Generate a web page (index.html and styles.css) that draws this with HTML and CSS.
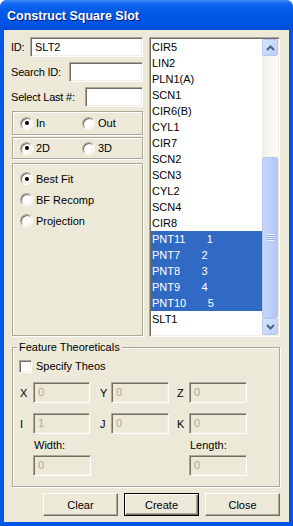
FILE: index.html
```html
<!DOCTYPE html>
<html lang="en">
<head>
    <meta charset="UTF-8">
    <title>Construct Square Slot</title>
    <link rel="stylesheet" href="styles.css">
</head>
<body>
    <div class="window">
        <div class="titlebar">Construct Square Slot</div>
        <div class="frame">
            <div class="client">
                <div class="top">
                    <div class="left">
                        <div class="field">
                            <span class="label">ID:</span>
                            <div class="edit edit-id">SLT2</div>
                        </div>
                        <div class="field">
                            <span class="label">Search ID:</span>
                            <div class="edit edit-search"></div>
                        </div>
                        <div class="field">
                            <span class="label">Select Last #:</span>
                            <div class="edit edit-last"></div>
                        </div>

                        <div class="group pair">
                            <div class="option"><span class="radio checked"></span>In</div>
                            <div class="option"><span class="radio"></span>Out</div>
                        </div>
                        <div class="group pair pair-small">
                            <div class="option"><span class="radio checked"></span>2D</div>
                            <div class="option"><span class="radio"></span>3D</div>
                        </div>
                        <div class="group methods">
                            <div class="option"><span class="radio checked"></span>Best Fit</div>
                            <div class="option"><span class="radio"></span>BF Recomp</div>
                            <div class="option"><span class="radio"></span>Projection</div>
                        </div>
                    </div>

                    <div class="listbox">
                        <div class="items">
                            <div class="item">CIR5</div>
                            <div class="item">LIN2</div>
                            <div class="item">PLN1(A)</div>
                            <div class="item">SCN1</div>
                            <div class="item">CIR6(B)</div>
                            <div class="item">CYL1</div>
                            <div class="item">CIR7</div>
                            <div class="item">SCN2</div>
                            <div class="item">SCN3</div>
                            <div class="item">CYL2</div>
                            <div class="item">SCN4</div>
                            <div class="item">CIR8</div>
                            <div class="item selected">PNT11       1</div>
                            <div class="item selected">PNT7       2</div>
                            <div class="item selected">PNT8       3</div>
                            <div class="item selected">PNT9       4</div>
                            <div class="item selected">PNT10       5</div>
                            <div class="item">SLT1</div>
                        </div>
                        <div class="scrollbar">
                            <div class="sb-button">
                                <svg width="9" height="6" viewBox="0 0 9 6"><path d="M1 5 L4.5 1.5 L8 5" fill="none" stroke="#4d6185" stroke-width="2"/></svg>
                            </div>
                            <div class="sb-track">
                                <div class="sb-thumb">
                                    <div class="grip"></div>
                                </div>
                            </div>
                            <div class="sb-button">
                                <svg width="9" height="6" viewBox="0 0 9 6"><path d="M1 1 L4.5 4.5 L8 1" fill="none" stroke="#4d6185" stroke-width="2"/></svg>
                            </div>
                        </div>
                    </div>
                </div>

                <fieldset class="theos">
                    <legend>Feature Theoreticals</legend>
                    <div class="check-row"><span class="checkbox"></span>Specify Theos</div>
                    <div class="coords">
                        <span class="axis">X</span><div class="edit disabled">0</div>
                        <span class="axis axis-mid">Y</span><div class="edit disabled">0</div>
                        <span class="axis axis-last">Z</span><div class="edit disabled">0</div>

                        <span class="axis">I</span><div class="edit disabled">1</div>
                        <span class="axis axis-mid">J</span><div class="edit disabled">0</div>
                        <span class="axis axis-last">K</span><div class="edit disabled">0</div>
                    </div>
                    <div class="size-row">
                        <div class="size">
                            <span class="size-label">Width:</span>
                            <div class="edit disabled">0</div>
                        </div>
                        <div class="size">
                            <span class="size-label">Length:</span>
                            <div class="edit disabled">0</div>
                        </div>
                    </div>
                </fieldset>

                <div class="buttons">
                    <button class="btn">Clear</button>
                    <button class="btn default">Create</button>
                    <button class="btn">Close</button>
                </div>
            </div>
        </div>
    </div>
</body>
</html>
```

FILE: styles.css
```css
* {
    box-sizing: border-box;
}

body {
    margin: 0;
    font-family: "Liberation Sans", Arial, sans-serif;
    font-size: 11px;
    color: #000;
    background: #fff;
}

.window {
    width: 293px;
    height: 526px;
    display: flex;
    flex-direction: column;
    border-radius: 7px 7px 0 0;
    overflow: hidden;
    background: #0055e5;
}

.titlebar {
    height: 30px;
    padding: 3px 0 0 7px;
    line-height: 26px;
    font-size: 12.5px;
    font-weight: bold;
    color: #fff;
    text-shadow: 1px 1px 0 #0a1883;
    background: linear-gradient(#3d8ff8 0, #1a6ef2 3px, #0860ec 7px, #0058e6 14px, #0054e2 24px, #004cd8 30px);
}

.frame {
    flex: 1;
    display: flex;
    border: 4px solid #0055e5;
    border-top: 0;
    box-shadow: inset 1px 0 0 #0842c6, inset -1px 0 0 #0842c6, inset 0 -1px 0 #0842c6;
}

.client {
    flex: 1;
    display: flex;
    flex-direction: column;
    padding: 7px 5px 0 8px;
    background: #ece9d8;
}

/* upper part: fields on the left, feature list on the right */
.top {
    display: flex;
    gap: 6px;
    height: 300px;
}

.left {
    width: 131px;
    display: flex;
    flex-direction: column;
}

.field {
    display: flex;
    align-items: center;
    justify-content: space-between;
    height: 20px;
    margin-bottom: 5px;
}

.field:nth-child(3) {
    margin-bottom: 4px;
}

.label {
    white-space: nowrap;
    margin-left: -1px;
    letter-spacing: -0.2px;
}

.edit {
    flex: 1;
    height: 20px;
    padding: 3px 0 0 4px;
    background: #fff;
    border: 1px solid;
    border-color: #aca899 #fff #fff #aca899;
    box-shadow: inset 1px 1px 0 #716f64, inset -1px -1px 0 #f1efe2;
    white-space: nowrap;
}

.edit-id {
    flex: none;
    width: 113px;
}

.edit-search {
    flex: none;
    width: 74px;
}

.edit-last {
    flex: none;
    width: 58px;
}

.edit.disabled {
    background: #ece9d8;
    color: #aca899;
}

.group {
    border: 1px solid #aca899;
    box-shadow: inset 1px 1px 0 #fff, 1px 1px 0 #fff;
}

.pair {
    display: grid;
    grid-template-columns: 62px 1fr;
    align-items: center;
    height: 24px;
    padding-left: 7px;
    margin-bottom: 2px;
}

.pair-small {
    height: 22px;
    margin-bottom: 4px;
}

.methods {
    flex: 1;
    padding: 4px 0 0 7px;
    margin-bottom: 1px;
}

.methods .option {
    height: 21px;
}

.option {
    display: flex;
    align-items: center;
}

.radio {
    width: 13px;
    height: 13px;
    margin-right: 3px;
    border-radius: 50%;
    background: #fff;
    border: 1px solid;
    border-color: #aca899 #fff #fff #aca899;
    box-shadow: inset 1px 1px 0 #716f64, inset -1px -1px 0 #f1efe2;
    display: flex;
    align-items: center;
    justify-content: center;
}

.radio.checked::after {
    content: "";
    width: 4px;
    height: 4px;
    border-radius: 50%;
    background: #000;
}

/* feature list */
.listbox {
    width: 131px;
    display: flex;
    background: #fff;
    border: 1px solid;
    border-color: #aca899 #fff #fff #aca899;
    box-shadow: inset 1px 1px 0 #716f64, inset -1px -1px 0 #f1efe2;
    padding: 1px;
}

.items {
    flex: 1;
}

.item {
    height: 16px;
    line-height: 16px;
    padding-left: 1px;
    white-space: pre;
}

.item.selected {
    background: #316ac5;
    color: #fff;
}

.scrollbar {
    width: 16px;
    display: flex;
    flex-direction: column;
    background: linear-gradient(90deg, #eeede5, #f5f4ef 40%, #fdfdfb);
}

.sb-button {
    height: 17px;
    display: flex;
    align-items: center;
    justify-content: center;
    border: 1px solid #b6c9f4;
    border-radius: 2px;
    background: linear-gradient(135deg, #d8e4fd, #bccff9);
}

.sb-track {
    flex: 1;
    display: flex;
    flex-direction: column;
    justify-content: flex-end;
}

.sb-thumb {
    height: 161px;
    display: flex;
    align-items: center;
    justify-content: center;
    border: 1px solid #b4c7f3;
    border-radius: 2px;
    background: linear-gradient(90deg, #c6d6fc, #bccefa 60%, #b3c6f5);
}

.grip {
    width: 7px;
    height: 7px;
    background: repeating-linear-gradient(#eef3fe 0, #eef3fe 1px, #8faaea 1px, #8faaea 2px);
}

/* theoreticals group */
.theos {
    margin: 4px 0 0;
    padding: 5px 0 10px 7px;
    min-inline-size: 0;
    width: 268px;
    border: 1px solid #aca899;
    box-shadow: inset 1px 1px 0 #fff, 1px 1px 0 #fff;
}

.theos legend {
    padding: 0 2px;
    margin-left: -3px;
    line-height: 13px;
    background: #ece9d8;
}

.check-row {
    display: flex;
    align-items: center;
    height: 14px;
    margin-left: -1px;
}

.checkbox {
    width: 13px;
    height: 13px;
    margin-right: 4px;
    background: #fff;
    border: 1px solid;
    border-color: #aca899 #fff #fff #aca899;
    box-shadow: inset 1px 1px 0 #716f64, inset -1px -1px 0 #f1efe2;
}

.coords {
    display: grid;
    grid-template-columns: 13px 57px 21px 58px 20px 58px;
    grid-auto-rows: 21px;
    row-gap: 10px;
    align-items: center;
    margin-top: 9px;
}

.coords .edit {
    height: 21px;
}

.axis-mid {
    padding-left: 10px;
}

.axis-last {
    padding-left: 8px;
}

.size-row {
    display: flex;
    justify-content: space-between;
    width: 214px;
    margin: 5px 0 0 13px;
}

.size {
    width: 58px;
    display: flex;
    flex-direction: column;
    gap: 3px;
}

.size-label {
    line-height: 13px;
    padding-left: 1px;
}

.size .edit {
    flex: none;
    height: 21px;
}

.buttons {
    display: flex;
    justify-content: flex-end;
    gap: 6px;
    margin-top: 6px;
    padding-right: 4px;
}

.btn {
    width: 75px;
    height: 23px;
    padding: 0;
    font-family: inherit;
    font-size: 11px;
    color: #000;
    background: #ece9d8;
    border: 1px solid;
    border-color: #fff #716f64 #716f64 #fff;
    box-shadow: inset -1px -1px 0 #aca899;
}

.btn.default {
    border: 1px solid #000;
    box-shadow: inset 1px 1px 0 #fff, inset -1px -1px 0 #716f64, inset -2px -2px 0 #aca899;
}
```
